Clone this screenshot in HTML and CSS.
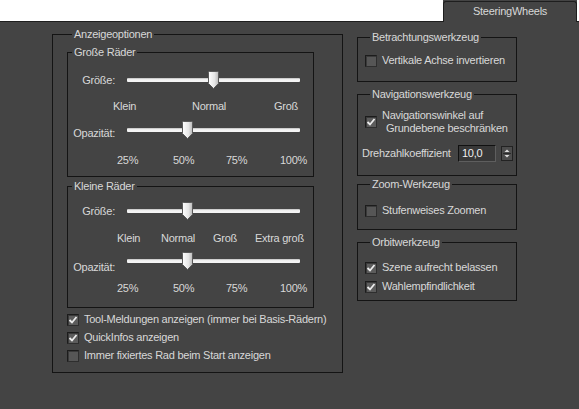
FILE: index.html
```html
<!DOCTYPE html>
<html lang="de">
<head>
<meta charset="utf-8">
<title>SteeringWheels</title>
<link rel="stylesheet" href="styles.css">
</head>
<body>
<svg class="defs" width="0" height="0" aria-hidden="true">
  <defs>
    <linearGradient id="thumbGrad" x1="0" y1="0" x2="1" y2="0">
      <stop offset="0" stop-color="#ffffff"/>
      <stop offset="0.6" stop-color="#e6e6e6"/>
      <stop offset="1" stop-color="#b8b8b8"/>
    </linearGradient>
  </defs>
</svg>

<div class="topbar">
  <div class="blank"></div>
  <div class="tab">SteeringWheels</div>
  <div class="tab-rest"></div>
</div>

<div class="main">
  <fieldset class="group outer">
    <legend>Anzeigeoptionen</legend>

    <fieldset class="group wheels big">
      <legend>Große Räder</legend>
      <div class="srow m12">
        <span class="slabel">Größe:</span>
        <div class="slider"><div class="track"></div>
          <svg class="thumb" style="left:81px" width="11" height="18" viewBox="0 0 11 18"><path d="M1.5 0.5H9.5Q10.5 0.5 10.5 1.5V12.5L5.5 17.5L0.5 12.5V1.5Q0.5 0.5 1.5 0.5Z" fill="url(#thumbGrad)" stroke="#5a5a5a"/></svg>
        </div>
      </div>
      <div class="ticks3 m11"><span>Klein</span><span>Normal</span><span>Groß</span></div>
      <div class="srow m8">
        <span class="slabel op3">Opazität:</span>
        <div class="slider"><div class="track"></div>
          <svg class="thumb" style="left:55px" width="11" height="18" viewBox="0 0 11 18"><path d="M1.5 0.5H9.5Q10.5 0.5 10.5 1.5V12.5L5.5 17.5L0.5 12.5V1.5Q0.5 0.5 1.5 0.5Z" fill="url(#thumbGrad)" stroke="#5a5a5a"/></svg>
        </div>
      </div>
      <div class="pct m15"><span>25%</span><span>50%</span><span>75%</span><span>100%</span></div>
    </fieldset>

    <fieldset class="group wheels small">
      <legend>Kleine Räder</legend>
      <div class="srow m9">
        <span class="slabel">Größe:</span>
        <div class="slider"><div class="track"></div>
          <svg class="thumb" style="left:55px" width="11" height="18" viewBox="0 0 11 18"><path d="M1.5 0.5H9.5Q10.5 0.5 10.5 1.5V12.5L5.5 17.5L0.5 12.5V1.5Q0.5 0.5 1.5 0.5Z" fill="url(#thumbGrad)" stroke="#5a5a5a"/></svg>
        </div>
      </div>
      <div class="ticks4 m12"><span>Klein</span><span>Normal</span><span>Groß</span><span>Extra groß</span></div>
      <div class="srow m7">
        <span class="slabel op6">Opazität:</span>
        <div class="slider"><div class="track"></div>
          <svg class="thumb" style="left:55px" width="11" height="18" viewBox="0 0 11 18"><path d="M1.5 0.5H9.5Q10.5 0.5 10.5 1.5V12.5L5.5 17.5L0.5 12.5V1.5Q0.5 0.5 1.5 0.5Z" fill="url(#thumbGrad)" stroke="#5a5a5a"/></svg>
        </div>
      </div>
      <div class="pct m12"><span>25%</span><span>50%</span><span>75%</span><span>100%</span></div>
    </fieldset>

    <div class="checks">
      <label class="cbrow"><span class="cb on"><svg width="10" height="10" viewBox="0 0 10 10"><path d="M1.5 5L4 7.5L8.5 2" fill="none" stroke="#ececec" stroke-width="1.8"/></svg></span>Tool-Meldungen anzeigen (immer bei Basis-Rädern)</label>
      <label class="cbrow"><span class="cb on"><svg width="10" height="10" viewBox="0 0 10 10"><path d="M1.5 5L4 7.5L8.5 2" fill="none" stroke="#ececec" stroke-width="1.8"/></svg></span>QuickInfos anzeigen</label>
      <label class="cbrow"><span class="cb"></span>Immer fixiertes Rad beim Start anzeigen</label>
    </div>
  </fieldset>

  <div class="right">
    <fieldset class="group rg betr">
      <legend>Betrachtungswerkzeug</legend>
      <label class="cbrow m10"><span class="cb"></span>Vertikale Achse invertieren</label>
    </fieldset>

    <fieldset class="group rg nav">
      <legend>Navigationswerkzeug</legend>
      <label class="cbrow m8"><span class="cb on"><svg width="10" height="10" viewBox="0 0 10 10"><path d="M1.5 5L4 7.5L8.5 2" fill="none" stroke="#ececec" stroke-width="1.8"/></svg></span><span class="two">Navigationswinkel auf<br>Grundebene beschränken</span></label>
      <div class="spinrow m9">
        <span class="splabel">Drehzahlkoeffizient</span>
        <span class="input">10,0</span>
        <span class="spin"><svg width="10" height="13" viewBox="0 0 10 13"><path d="M2.5 5H7.5L5 2.5Z" fill="#dcdcdc"/><path d="M1 6.5H9" stroke="#2a2a2a"/><path d="M2.5 8H7.5L5 10.5Z" fill="#dcdcdc"/></svg></span>
      </div>
    </fieldset>

    <fieldset class="group rg zoomg">
      <legend>Zoom-Werkzeug</legend>
      <label class="cbrow m13"><span class="cb"></span>Stufenweises Zoomen</label>
    </fieldset>

    <fieldset class="group rg orbit">
      <legend>Orbitwerkzeug</legend>
      <label class="cbrow m12"><span class="cb on"><svg width="10" height="10" viewBox="0 0 10 10"><path d="M1.5 5L4 7.5L8.5 2" fill="none" stroke="#ececec" stroke-width="1.8"/></svg></span>Szene aufrecht belassen</label>
      <label class="cbrow m6"><span class="cb on"><svg width="10" height="10" viewBox="0 0 10 10"><path d="M1.5 5L4 7.5L8.5 2" fill="none" stroke="#ececec" stroke-width="1.8"/></svg></span>Wahlempfindlichkeit</label>
    </fieldset>
  </div>
</div>
</body>
</html>
```

FILE: styles.css
```css
html, body {
  margin: 0;
  padding: 0;
}
body {
  background: #444444;
  color: #d8d8d8;
  font: 11px/13px "Liberation Sans", Arial, sans-serif;
  letter-spacing: -0.25px;
  width: 579px;
  height: 409px;
  overflow: hidden;
}
.defs {
  position: absolute;
  width: 0;
  height: 0;
}

/* top tab strip */
.topbar {
  display: flex;
  height: 22px;
}
.blank,
.tab-rest {
  height: 22px;
  box-sizing: border-box;
  background: #ffffff;
  border-bottom: 1px solid #1e1e1e;
}
.blank {
  width: 443px;
}
.tab-rest {
  flex: 1;
}
.tab {
  width: 134px;
  height: 21px;
  margin-top: 1px;
  box-sizing: border-box;
  border: 1px solid #1e1e1e;
  border-bottom: none;
  border-radius: 3px 3px 0 0;
  background: #444444;
  text-align: center;
  line-height: 19px;
  color: #d8d8d8;
}

/* layout */
.main {
  display: flex;
  align-items: flex-start;
  padding: 6px 0 0 52px;
}
.group {
  margin: 0;
  padding: 0;
  border: 1px solid #141414;
  min-inline-size: 0;
  box-sizing: border-box;
}
.group > legend {
  padding: 0 2px;
  margin-left: 5px;
  line-height: 13px;
}
.outer {
  width: 291px;
  padding: 5px 0 10px 14px;
}
.wheels {
  width: 247px;
}
.wheels > legend {
  margin-left: 4px;
}
.big {
  padding-bottom: 9px;
}
.small {
  margin-top: 3px;
  padding-bottom: 12px;
}

/* slider rows */
.srow {
  display: flex;
  align-items: center;
  height: 18px;
}
.slabel {
  flex: none;
  width: 47px;
  text-align: right;
}
.op3 {
  margin-top: 6px;
}
.op6 {
  margin-top: 12px;
}
.slider {
  position: relative;
  flex: none;
  width: 173px;
  height: 18px;
  margin-left: 12px;
  display: flex;
  align-items: center;
}
.track {
  width: 100%;
  height: 4px;
  box-sizing: border-box;
  background: linear-gradient(#bdbdbd, #f2f2f2 40%, #f6f6f6);
  border-radius: 1px;
}
.thumb {
  position: absolute;
  top: 0;
}

.ticks3 {
  display: grid;
  grid-template-columns: 79px 1fr auto;
  width: 185px;
  margin-left: 45px;
}
.ticks4 {
  display: grid;
  grid-template-columns: 44px 52px 42px auto;
  margin-left: 49px;
}
.pct {
  display: grid;
  grid-template-columns: 56px 53px 54px auto;
  margin-left: 49px;
}

.m6 { margin-top: 6px; }
.m7 { margin-top: 7px; }
.m8 { margin-top: 8px; }
.m9 { margin-top: 9px; }
.m10 { margin-top: 10px; }
.m11 { margin-top: 11px; }
.m12 { margin-top: 12px; }
.m13 { margin-top: 13px; }
.m15 { margin-top: 15px; }

/* checkboxes */
.checks {
  display: flex;
  flex-direction: column;
  gap: 5px;
  margin-top: 5px;
}
.cbrow {
  display: flex;
  align-items: center;
  gap: 5px;
  white-space: nowrap;
}
.cb {
  flex: none;
  width: 12px;
  height: 12px;
  box-sizing: border-box;
  border: 1px solid #1c1c1c;
  border-right-color: #2e2e2e;
  border-bottom-color: #2e2e2e;
  background: #565656;
  box-shadow: inset 1px 1px 0 #3a3a3a;
  display: flex;
  align-items: center;
  justify-content: center;
}
.cb.on {
  background: #5c5c5c;
}
.two {
  padding-left: 4px;
  text-indent: -4px;
  white-space: normal;
}

/* right column */
.right {
  display: flex;
  flex-direction: column;
  width: 160px;
  margin: 3px 0 0 14px;
}
.rg {
  width: 160px;
  padding-left: 7px;
}
.betr {
  padding-bottom: 14px;
}
.nav {
  margin-top: 6px;
  padding-bottom: 13px;
}
.zoomg {
  margin-top: 2px;
  padding-bottom: 12px;
}
.orbit {
  margin-top: 6px;
  padding-bottom: 7px;
}

.spinrow {
  display: flex;
  align-items: center;
  height: 18px;
  margin-left: -3px;
}
.splabel {
  width: 96px;
  flex: none;
  white-space: nowrap;
}
.input {
  width: 38px;
  height: 17px;
  box-sizing: border-box;
  border: 1px solid #111111;
  border-right-color: #5e5e5e;
  border-bottom-color: #5e5e5e;
  background: #383838;
  color: #f0f0f0;
  padding-left: 3px;
  line-height: 15px;
}
.spin {
  width: 12px;
  height: 15px;
  margin-left: 5px;
  box-sizing: border-box;
  border: 1px solid #222222;
  background: #4c4c4c;
  display: flex;
  align-items: center;
  justify-content: center;
}
```
